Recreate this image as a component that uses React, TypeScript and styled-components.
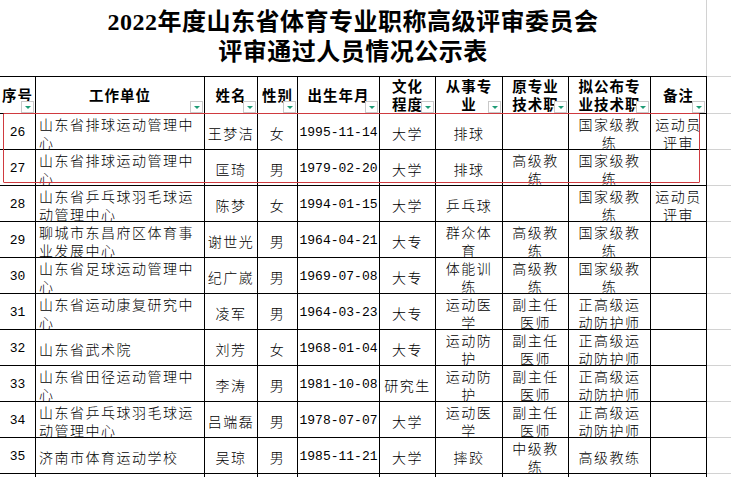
import React from 'react';
import styled, { createGlobalStyle } from 'styled-components';

const GlobalStyle = createGlobalStyle`
  html, body { margin: 0; padding: 0; background: #fff; }
  body { width: 731px; height: 477px; overflow: hidden; }
`;

const COLS = [36, 169, 53, 40, 82, 56, 67, 66, 82, 56];

const Page = styled.div`
  position: relative;
  width: 731px;
  height: 477px;
  overflow: hidden;
  background: #fff;
  color: #000;
  font-family: "Noto Sans CJK SC", sans-serif;
`;

const Sheet = styled.div`
  display: grid;
  grid-template-columns: ${COLS.map((c) => `${c}px`).join(' ')} 1fr;
  grid-template-rows: 76px 38px;
  grid-auto-rows: 36px;
`;

const TitleCell = styled.div`
  grid-column: 1 / span 10;
  box-sizing: border-box;
  border-right: 1px solid #d2d2d2;
  display: flex;
  flex-direction: column;
  align-items: center;
  justify-content: center;
  padding-bottom: 3px;
  font-family: "Liberation Serif", "Noto Sans CJK SC", serif;
  font-weight: 700;
  font-size: 24px;
  line-height: 30px;
  letter-spacing: 0.5px;
  white-space: nowrap;
`;

const GridFill = styled.div<{ $top?: boolean; $bottom?: boolean }>`
  box-sizing: border-box;
  border-top: ${(p) => (p.$top ? '1px solid #d2d2d2' : 'none')};
  border-bottom: ${(p) => (p.$bottom ? '1px solid #d2d2d2' : 'none')};
`;

const HeadCell = styled.div`
  position: relative;
  box-sizing: border-box;
  border-top: 1px solid #000;
  border-right: 1px solid #000;
  border-bottom: 1px solid #000;
  display: flex;
  align-items: center;
  justify-content: center;
  text-align: center;
  white-space: pre;
  overflow: hidden;
  font-weight: 700;
  font-size: 14.5px;
  line-height: 18px;
  letter-spacing: 1px;
`;

const FilterBtn = styled.span`
  position: absolute;
  right: 1px;
  bottom: 0;
  width: 13px;
  height: 12px;
  box-sizing: border-box;
  border: 1px solid #c9c9c9;
  background: #fff;
  &::after {
    content: '';
    position: absolute;
    left: 3px;
    top: 4px;
    border-left: 3px solid transparent;
    border-right: 3px solid transparent;
    border-top: 3px solid #1f9c76;
  }
`;

const Cell = styled.div<{ $left?: boolean; $mono?: boolean }>`
  box-sizing: border-box;
  border-right: 1px solid #000;
  border-bottom: 1px solid #000;
  display: flex;
  align-items: center;
  justify-content: ${(p) => (p.$left ? 'flex-start' : 'center')};
  text-align: ${(p) => (p.$left ? 'left' : 'center')};
  padding: ${(p) => (p.$left ? '3px 0 0 3px' : '3px 0 0 0')};
  white-space: pre;
  overflow: hidden;
  font-family: ${(p) => (p.$mono ? '"Liberation Mono", monospace' : '"Noto Sans CJK SC", sans-serif')};
  font-weight: ${(p) => (p.$mono ? 400 : 300)};
  font-size: ${(p) => (p.$mono ? '13px' : '14px')};
  letter-spacing: ${(p) => (p.$mono ? '0' : '1.5px')};
  line-height: 18px;
`;

const Highlight = styled.div`
  position: absolute;
  left: 3px;
  top: 113px;
  width: 697px;
  height: 70px;
  box-sizing: border-box;
  border: 1px solid #cf3a3f;
  border-radius: 1px;
  pointer-events: none;
`;

const HEADERS = [
  '序号',
  '工作单位',
  '姓名',
  '性别',
  '出生年月',
  '文化\n程度',
  '从事专\n业',
  '原专业\n技术职',
  '拟公布专\n业技术职',
  '备注',
];

type Row = string[];

const ROWS: Row[] = [
  ['26', '山东省排球运动管理中\n心', '王梦洁', '女', '1995-11-14', '大学', '排球', '', '国家级教\n练', '运动员\n评审'],
  ['27', '山东省排球运动管理中\n心', '匡琦', '男', '1979-02-20', '大学', '排球', '高级教\n练', '国家级教\n练', ''],
  ['28', '山东省乒乓球羽毛球运\n动管理中心', '陈梦', '女', '1994-01-15', '大学', '乒乓球', '', '国家级教\n练', '运动员\n评审'],
  ['29', '聊城市东昌府区体育事\n业发展中心', '谢世光', '男', '1964-04-21', '大专', '群众体\n育', '高级教\n练', '国家级教\n练', ''],
  ['30', '山东省足球运动管理中\n心', '纪广崴', '男', '1969-07-08', '大专', '体能训\n练', '高级教\n练', '国家级教\n练', ''],
  ['31', '山东省运动康复研究中\n心', '凌军', '男', '1964-03-23', '大专', '运动医\n学', '副主任\n医师', '正高级运\n动防护师', ''],
  ['32', '山东省武术院', '刘芳', '女', '1968-01-04', '大专', '运动防\n护', '副主任\n医师', '正高级运\n动防护师', ''],
  ['33', '山东省田径运动管理中\n心', '李涛', '男', '1981-10-08', '研究生', '运动防\n护', '副主任\n医师', '正高级运\n动防护师', ''],
  ['34', '山东省乒乓球羽毛球运\n动管理中心', '吕端磊', '男', '1978-07-07', '大学', '运动医\n学', '副主任\n医师', '正高级运\n动防护师', ''],
  ['35', '济南市体育运动学校', '吴琼', '男', '1985-11-21', '大学', '摔跤', '中级教\n练', '高级教练', ''],
  ['', '', '', '', '', '', '', '', '', ''],
];

export default function App() {
  return (
    <Page>
      <GlobalStyle />
      <Sheet>
        <TitleCell>
          <span>2022年度山东省体育专业职称高级评审委员会</span>
          <span>评审通过人员情况公示表</span>
        </TitleCell>
        <GridFill />
        {HEADERS.map((h) => (
          <HeadCell key={h}>
            {h}
            <FilterBtn />
          </HeadCell>
        ))}
        <GridFill $top $bottom />
        {ROWS.map((row, ri) => (
          <React.Fragment key={ri}>
            {row.map((v, ci) => (
              <Cell key={ci} $left={ci === 1} $mono={ci === 0 || ci === 4}>
                {v}
              </Cell>
            ))}
            <GridFill $bottom />
          </React.Fragment>
        ))}
      </Sheet>
      <Highlight />
    </Page>
  );
}
